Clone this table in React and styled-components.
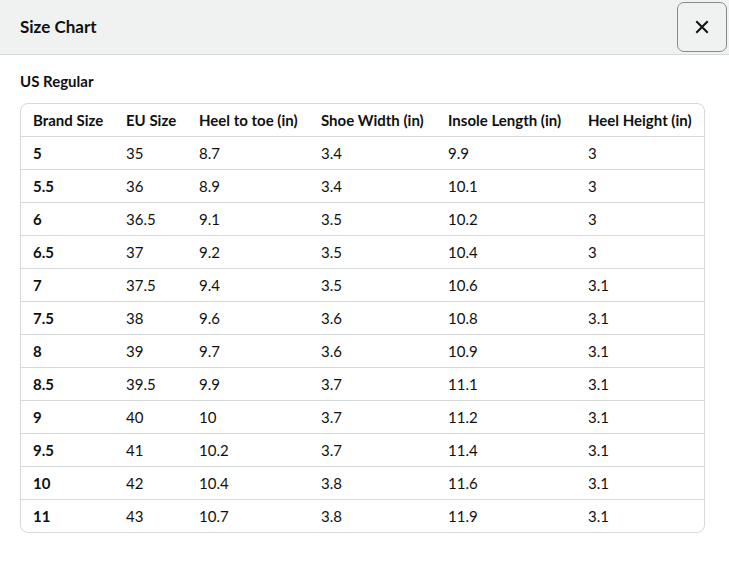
import React from 'react'
import styled, { createGlobalStyle } from 'styled-components'

const GlobalStyle = createGlobalStyle`
    html, body {
        margin: 0;
        padding: 0;
        background: #ffffff;
        font-family: Lato, "Noto Sans", Arial, sans-serif;
        color: #0f1111;
    }
`

const Modal = styled.div`
    width: 729px;
    height: 568px;
    background: #ffffff;
    display: flex;
    flex-direction: column;
`

const Header = styled.div`
    height: 55px;
    box-sizing: border-box;
    background: #f0f2f2;
    border-bottom: 1px solid #d5d9d9;
    display: flex;
    align-items: center;
    justify-content: space-between;
    padding: 0 2px 0 20px;
`

const Title = styled.h2`
    margin: 0;
    font-size: 17px;
    font-weight: 700;
    line-height: 24px;
`

const CloseButton = styled.button`
    width: 50px;
    height: 50px;
    box-sizing: border-box;
    border: 1.5px solid #888c8c;
    border-radius: 7px;
    background: #f0f2f2;
    display: flex;
    align-items: center;
    justify-content: center;
    padding: 0;
    cursor: pointer;
`

const Body = styled.div`
    padding: 16px 24px 0 20px;
`

const Subtitle = styled.h3`
    margin: 0 0 12px 0;
    font-size: 15px;
    font-weight: 700;
    line-height: 20px;
`

const TableWrap = styled.div`
    width: 685px;
    border: 1px solid #d5d9d9;
    border-radius: 8px;
    overflow: hidden;
    box-sizing: border-box;
`

const Table = styled.table`
    width: 100%;
    border-collapse: collapse;
    table-layout: fixed;
    font-size: 15px;
`

const Row = styled.tr`
    height: ${p => (p.$first ? '32px' : '33px')};
    border-top: ${p => (p.$first ? 'none' : '1px solid #d5d9d9')};
`

const Cell = styled.td`
    padding: 0 0 0 12px;
    text-align: left;
    vertical-align: middle;
    font-weight: ${p => (p.$bold ? 700 : 400)};
    white-space: nowrap;
`

const HeadCell = styled.th`
    padding: 0 0 0 12px;
    text-align: left;
    font-weight: 700;
    white-space: nowrap;
`

const columns = [
    { label: 'Brand Size', width: 93 },
    { label: 'EU Size', width: 73 },
    { label: 'Heel to toe (in)', width: 122 },
    { label: 'Shoe Width (in)', width: 127 },
    { label: 'Insole Length (in)', width: 140 },
    { label: 'Heel Height (in)', width: 128 }
]

const rows = [
    ['5', '35', '8.7', '3.4', '9.9', '3'],
    ['5.5', '36', '8.9', '3.4', '10.1', '3'],
    ['6', '36.5', '9.1', '3.5', '10.2', '3'],
    ['6.5', '37', '9.2', '3.5', '10.4', '3'],
    ['7', '37.5', '9.4', '3.5', '10.6', '3.1'],
    ['7.5', '38', '9.6', '3.6', '10.8', '3.1'],
    ['8', '39', '9.7', '3.6', '10.9', '3.1'],
    ['8.5', '39.5', '9.9', '3.7', '11.1', '3.1'],
    ['9', '40', '10', '3.7', '11.2', '3.1'],
    ['9.5', '41', '10.2', '3.7', '11.4', '3.1'],
    ['10', '42', '10.4', '3.8', '11.6', '3.1'],
    ['11', '43', '10.7', '3.8', '11.9', '3.1']
]

const CloseIcon = () => (
    <svg width="14" height="14" viewBox="0 0 14 14">
        <path d="M2 2 L12 12 M12 2 L2 12" stroke="#0f1111" strokeWidth="2" strokeLinecap="square" fill="none" />
    </svg>
)

const App = () => (
    <>
        <GlobalStyle />
        <Modal>
            <Header>
                <Title>Size Chart</Title>
                <CloseButton aria-label="Close">
                    <CloseIcon />
                </CloseButton>
            </Header>
            <Body>
                <Subtitle>US Regular</Subtitle>
                <TableWrap>
                    <Table>
                        <colgroup>
                            {columns.map(c => (
                                <col key={c.label} style={{ width: c.width }} />
                            ))}
                        </colgroup>
                        <thead>
                            <Row $first>
                                {columns.map(c => (
                                    <HeadCell key={c.label}>{c.label}</HeadCell>
                                ))}
                            </Row>
                        </thead>
                        <tbody>
                            {rows.map(r => (
                                <Row key={r[0]}>
                                    {r.map((v, i) => (
                                        <Cell key={i} $bold={i === 0}>{v}</Cell>
                                    ))}
                                </Row>
                            ))}
                        </tbody>
                    </Table>
                </TableWrap>
            </Body>
        </Modal>
    </>
)

export default App
